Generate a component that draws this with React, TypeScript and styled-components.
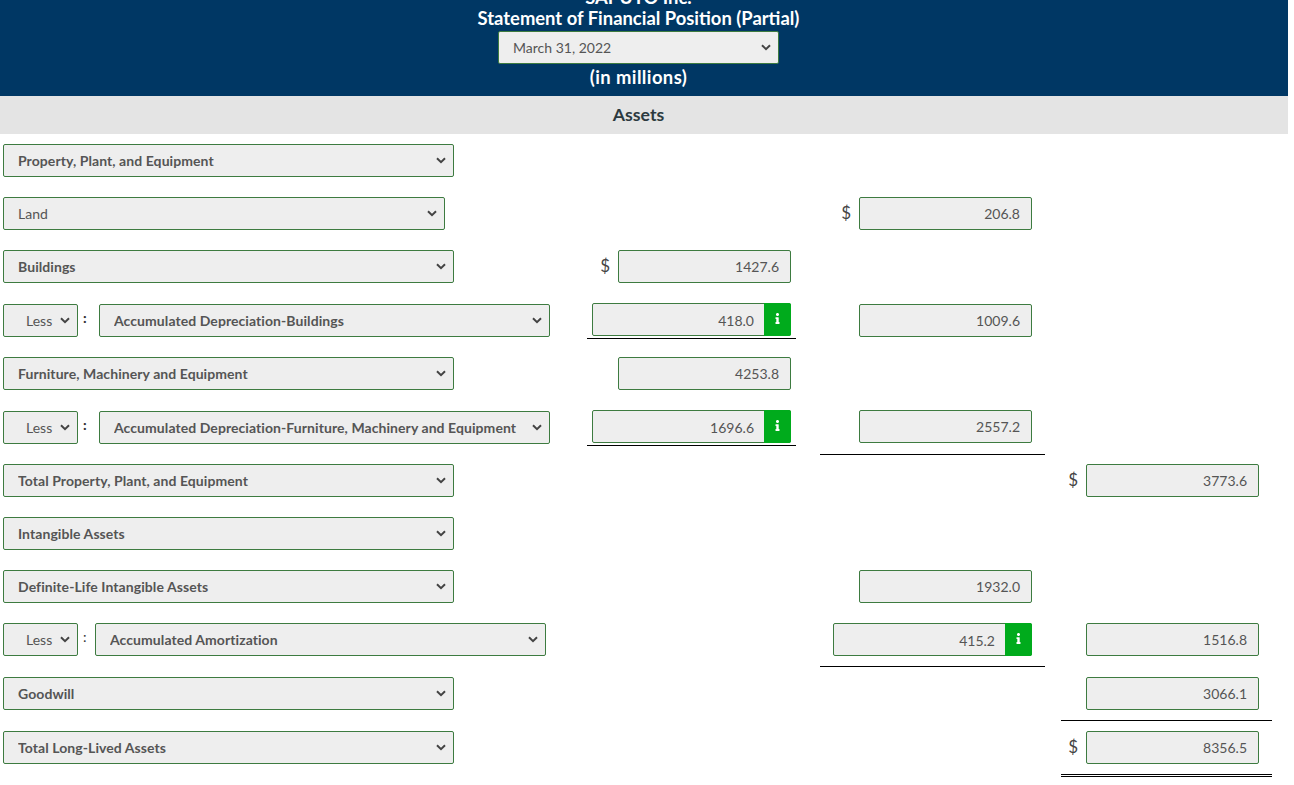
import styled, { createGlobalStyle, css } from "styled-components";
import { FaInfo } from "react-icons/fa";

const GlobalStyle = createGlobalStyle`
  html, body {
    margin: 0;
    padding: 0;
    background: #fff;
    overflow: hidden;
  }
  body {
    font-family: Lato, "Open Sans", sans-serif;
    color: #444;
  }
`;

const chevron = encodeURIComponent(
  '<svg xmlns="http://www.w3.org/2000/svg" width="10" height="7" viewBox="0 0 10 7"><path d="M1 1.2 5 5.2 9 1.2" fill="none" stroke="#444" stroke-width="2"/></svg>'
);

const selectBase = css`
  appearance: none;
  height: 33px;
  flex-shrink: 0;
  background-color: #eee;
  background-image: url("data:image/svg+xml,${chevron}");
  background-repeat: no-repeat;
  background-position: right 7px center;
  border: 1px solid #3d7b40;
  border-radius: 2px;
  color: #555;
  font-family: inherit;
  font-size: 14px;
`;

const Page = styled.div`
  width: 1288px;
`;

const Header = styled.header`
  height: 96px;
  overflow: hidden;
  background: #003764;
  color: #fff;
  display: flex;
  flex-direction: column;
  justify-content: flex-end;
  align-items: center;
  padding: 0 11px 7px 0;
  box-sizing: border-box;
  font-weight: 700;
  line-height: 24px;
`;

const CompanyName = styled.div`
  font-size: 18.4px;
  flex-shrink: 0;
  margin-bottom: -3px;
`;

const Title = styled.div`
  font-size: 18.4px;
  flex-shrink: 0;
`;

const Units = styled.div`
  font-size: 18.4px;
  letter-spacing: 0.4px;
  flex-shrink: 0;
`;

const DateSelect = styled.select`
  ${selectBase}
  width: 281px;
  margin: 1px 0 1px;
  padding: 0 0 0 14px;
  font-weight: 400;
`;

const SectionBar = styled.div`
  height: 38px;
  background: #e4e4e4;
  padding: 0 11px 2px 0;
  box-sizing: border-box;
  display: flex;
  align-items: center;
  justify-content: center;
  font-size: 17.7px;
  font-weight: 700;
  color: #2c3a3f;
`;

const Rows = styled.div`
  padding: 10px 0 0 3px;
`;

const Row = styled.div<{ $h?: number }>`
  display: grid;
  grid-template-columns: 584px 209px 24px 225px 16px 211px;
  height: ${(p) => p.$h ?? 53}px;
  align-items: start;
`;

const Label = styled.div<{ $nudge?: boolean }>`
  grid-column: 1;
  display: flex;
  align-items: flex-start;
  margin-top: ${(p) => (p.$nudge ? 1 : 0)}px;
`;

const Picker = styled.select<{ $w?: number; $light?: boolean }>`
  ${selectBase}
  width: ${(p) => p.$w ?? 451}px;
  padding: 0 0 0 14px;
  font-weight: ${(p) => (p.$light ? 400 : 700)};
  letter-spacing: ${(p) => (p.$light ? 0 : 0.07)}px;
`;

const LessPicker = styled.select`
  ${selectBase}
  width: 75px;
  padding-left: 22px;
  font-weight: 400;
`;

const Colon = styled.span<{ $light?: boolean; $w?: number }>`
  width: ${(p) => p.$w ?? 21}px;
  padding-left: 5px;
  box-sizing: border-box;
  font-size: 14px;
  font-weight: ${(p) => (p.$light ? 400 : 900)};
  line-height: 28px;
  color: #333;
`;

const Cell = styled.div<{ $col: 2 | 4 | 6; $line?: "single" | "double"; $gap?: number }>`
  grid-column: ${(p) => p.$col};
  display: flex;
  justify-content: flex-end;
  align-items: center;
  padding-right: ${(p) => (p.$col === 2 ? 5 : 13)}px;
  padding-bottom: ${(p) => (!p.$line ? 0 : p.$gap ?? (p.$col === 2 ? 2 : 10))}px;
  border-bottom: ${(p) =>
    p.$line === "double" ? "3px double #000" : p.$line ? "1px solid #000" : "none"};
`;

const Dollar = styled.span`
  font-size: 17px;
  color: #444;
  margin: 0 8px 2px 0;
`;

const Amount = styled.div<{ $nudge?: boolean }>`
  width: 173px;
  height: 33px;
  margin-top: ${(p) => (p.$nudge ? 1 : 0)}px;
  box-sizing: border-box;
  display: flex;
  align-items: center;
  justify-content: flex-end;
  padding-right: 11px;
  background: #eee;
  border: 1px solid #3d7b40;
  border-radius: 2px;
  color: #555;
  font-size: 14px;
`;

const InfoAmount = styled.div`
  width: 199px;
  height: 33px;
  box-sizing: border-box;
  display: flex;
  background: #eee;
  border: 1px solid #3d7b40;
  border-radius: 2px;
  color: #555;
  font-size: 14px;
`;

const InfoValue = styled.span`
  flex: 1;
  display: flex;
  align-items: center;
  justify-content: flex-end;
  padding: 1px 10px 0 0;
`;

const InfoBadge = styled.span`
  width: 27px;
  margin: -1px -1px -1px 0;
  background: #00ab1c;
  border-radius: 0 2px 2px 0;
  color: #fff;
  display: flex;
  align-items: center;
  justify-content: center;
  font-size: 11px;
  padding-bottom: 2px;
  box-sizing: border-box;
`;

function Choice({ text, ...rest }: { text: string; $w?: number; $light?: boolean }) {
  return (
    <Picker {...rest} defaultValue={text}>
      <option>{text}</option>
    </Picker>
  );
}

function LessChoice() {
  return (
    <LessPicker defaultValue="Less">
      <option>Less</option>
    </LessPicker>
  );
}

function InfoField({ value }: { value: string }) {
  return (
    <InfoAmount>
      <InfoValue>{value}</InfoValue>
      <InfoBadge>
        <FaInfo />
      </InfoBadge>
    </InfoAmount>
  );
}

export default function App() {
  return (
    <Page>
      <GlobalStyle />
      <Header>
        <CompanyName>SAPUTO Inc.</CompanyName>
        <Title>Statement of Financial Position (Partial)</Title>
        <DateSelect defaultValue="March 31, 2022">
          <option>March 31, 2022</option>
        </DateSelect>
        <Units>(in millions)</Units>
      </Header>
      <SectionBar>Assets</SectionBar>
      <Rows>
        <Row>
          <Label>
            <Choice text="Property, Plant, and Equipment" />
          </Label>
        </Row>
        <Row>
          <Label>
            <Choice text="Land" $w={442} $light />
          </Label>
          <Cell $col={4}>
            <Dollar>$</Dollar>
            <Amount>206.8</Amount>
          </Cell>
        </Row>
        <Row>
          <Label>
            <Choice text="Buildings" />
          </Label>
          <Cell $col={2}>
            <Dollar>$</Dollar>
            <Amount>1427.6</Amount>
          </Cell>
        </Row>
        <Row $h={54}>
          <Label $nudge>
            <LessChoice />
            <Colon>:</Colon>
            <Choice text="Accumulated Depreciation-Buildings" />
          </Label>
          <Cell $col={2} $line="single">
            <InfoField value="418.0" />
          </Cell>
          <Cell $col={4}>
            <Amount $nudge>1009.6</Amount>
          </Cell>
        </Row>
        <Row>
          <Label>
            <Choice text="Furniture, Machinery and Equipment" />
          </Label>
          <Cell $col={2}>
            <Amount>4253.8</Amount>
          </Cell>
        </Row>
        <Row $h={54}>
          <Label $nudge>
            <LessChoice />
            <Colon>:</Colon>
            <Choice text="Accumulated Depreciation-Furniture, Machinery and Equipment" />
          </Label>
          <Cell $col={2} $line="single">
            <InfoField value="1696.6" />
          </Cell>
          <Cell $col={4} $line="single" $gap={11}>
            <Amount>2557.2</Amount>
          </Cell>
        </Row>
        <Row>
          <Label>
            <Choice text="Total Property, Plant, and Equipment" />
          </Label>
          <Cell $col={6}>
            <Dollar>$</Dollar>
            <Amount>3773.6</Amount>
          </Cell>
        </Row>
        <Row>
          <Label>
            <Choice text="Intangible Assets" />
          </Label>
        </Row>
        <Row>
          <Label>
            <Choice text="Definite-Life Intangible Assets" />
          </Label>
          <Cell $col={4}>
            <Amount>1932.0</Amount>
          </Cell>
        </Row>
        <Row $h={54}>
          <Label>
            <LessChoice />
            <Colon $light $w={17}>:</Colon>
            <Choice text="Accumulated Amortization" />
          </Label>
          <Cell $col={4} $line="single">
            <InfoField value="415.2" />
          </Cell>
          <Cell $col={6}>
            <Amount>1516.8</Amount>
          </Cell>
        </Row>
        <Row $h={54}>
          <Label>
            <Choice text="Goodwill" />
          </Label>
          <Cell $col={6} $line="single">
            <Amount>3066.1</Amount>
          </Cell>
        </Row>
        <Row>
          <Label>
            <Choice text="Total Long-Lived Assets" />
          </Label>
          <Cell $col={6} $line="double">
            <Dollar>$</Dollar>
            <Amount>8356.5</Amount>
          </Cell>
        </Row>
      </Rows>
    </Page>
  );
}
